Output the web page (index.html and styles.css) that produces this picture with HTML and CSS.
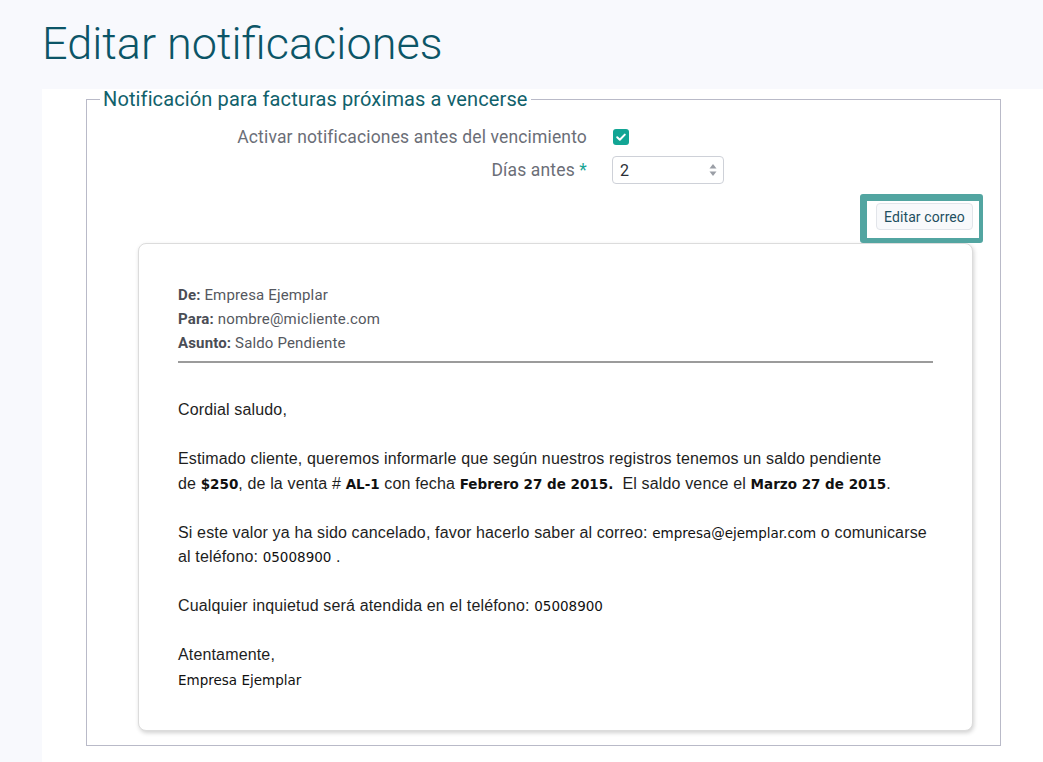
FILE: index.html
```html
<!DOCTYPE html>
<html lang="es">
<head>
<meta charset="utf-8">
<title>Editar notificaciones</title>
<link rel="stylesheet" href="styles.css">
</head>
<body>
<header class="page-head">
  <h1 class="title">Editar notificaciones</h1>
</header>
<main class="panel">
  <fieldset class="group">
    <legend class="group-title">Notificación para facturas próximas a vencerse</legend>
    <div class="form">
      <div class="row">
        <label class="label">Activar notificaciones antes del vencimiento</label>
        <div class="control">
          <span class="checkbox"><svg viewBox="0 0 16 16" width="16" height="16"><path d="M4.2 8.3l2.6 2.5 5-5.2" fill="none" stroke="#fff" stroke-width="2" stroke-linecap="round" stroke-linejoin="round"/></svg></span>
        </div>
      </div>
      <div class="row">
        <label class="label">Días antes <span class="req">*</span></label>
        <div class="control">
          <div class="number">
            <span class="number-value">2</span>
            <svg class="spin" viewBox="0 0 10 18" width="10" height="18"><path d="M5 3L8.5 7.5H1.5z" fill="#9a9ea6"/><path d="M5 15L8.5 10.5H1.5z" fill="#9a9ea6"/></svg>
          </div>
        </div>
      </div>
    </div>
    <div class="actions">
      <div class="highlight"><button class="btn" type="button">Editar correo</button></div>
    </div>
    <section class="mail">
      <div class="mail-head">
        <div><b>De:</b> Empresa Ejemplar</div>
        <div><b>Para:</b> nombre@micliente.com</div>
        <div><b>Asunto:</b> Saldo Pendiente</div>
      </div>
      <hr class="mail-rule">
      <div class="mail-body">
        <p>Cordial saludo,</p>
        <p>Estimado cliente, queremos informarle que según nuestros registros tenemos un saldo pendiente<br>de <b class="v">$250</b>, de la venta # <b class="v">AL-1</b> con fecha <b class="v">Febrero 27 de 2015.</b>&nbsp; El saldo vence el <b class="v">Marzo 27 de 2015</b>.</p>
        <p>Si este valor ya ha sido cancelado, favor hacerlo saber al correo: <span class="v">empresa@ejemplar.com</span> o comunicarse<br>al teléfono: <span class="v">05008900</span> .</p>
        <p>Cualquier inquietud será atendida en el teléfono: <span class="v">05008900</span></p>
        <p>Atentamente,<br><span class="v">Empresa Ejemplar</span></p>
      </div>
    </section>
  </fieldset>
</main>
</body>
</html>
```

FILE: styles.css
```css
* { box-sizing: border-box; }
html, body { margin: 0; padding: 0; }
body {
  background: #f8f9fd;
  font-family: Roboto, "Liberation Sans", Arial, sans-serif;
  min-height: 762px;
}
.page-head {
  padding: 17px 0 0 42px;
  height: 89px;
}
.title {
  margin: 0;
  font-family: Roboto, sans-serif;
  font-weight: 300;
  font-size: 45px;
  line-height: 54px;
  color: #0c5567;
}
.panel {
  margin-left: 42px;
  background: #fff;
  padding: 0 42px 18px 44px;
  min-height: 673px;
}
.group {
  margin: 0;
  border: 1px solid #b9bac8;
  padding: 0 13px 14px 13px;
}
.group-title {
  padding: 0 3px 0 3px;
  font-size: 20px;
  letter-spacing: 0.12px;
  line-height: 20px;
  color: #11616b;
}
.form {
  margin-top: 14px;
  display: flex;
  flex-direction: column;
  gap: 5px;
}
.row {
  display: grid;
  grid-template-columns: 487px auto;
  column-gap: 25px;
  align-items: center;
  height: 28px;
}
.label {
  text-align: right;
  font-size: 17.5px;
  letter-spacing: 0.15px;
  color: #6b6e77;
}
.req { color: #1aa596; }
.control { display: flex; align-items: center; }
.checkbox {
  width: 16px;
  height: 16px;
  margin-left: 1px;
  border-radius: 3px;
  background: #12a594;
  display: block;
}
.checkbox svg { display: block; }
.number {
  width: 112px;
  height: 28px;
  border: 1px solid #ced1d8;
  border-radius: 4px;
  display: flex;
  align-items: center;
  justify-content: space-between;
  padding: 0 5px 0 7px;
}
.number-value { font-size: 16px; color: #2b2f36; }
.spin { display: block; }
.actions {
  display: flex;
  justify-content: flex-end;
  padding: 10px 4px 0 0;
}
.highlight {
  border-style: solid;
  border-color: #52a5a1;
  border-width: 7px 4px 5px 7px;
  border-radius: 3px;
  padding: 2px 6px 8px 9px;
  background: #fff;
}
.btn {
  display: block;
  height: 27px;
  width: 97px;
  padding: 0;
  background: #f8f9fb;
  border: 1px solid #e2e5ea;
  border-radius: 4px;
  font-family: Roboto, sans-serif;
  font-size: 14px;
  letter-spacing: 0.1px;
  color: #1e4f60;
}
.mail {
  margin: 0 14px 0 38px;
  background: #fff;
  border: 1px solid #dcdcdc;
  border-radius: 8px;
  box-shadow: 1px 2px 4px rgba(0,0,0,0.18);
  padding: 39px 39px 38px 39px;
}
.mail-head {
  font-size: 15px;
  letter-spacing: 0.15px;
  line-height: 24px;
  color: #555860;
}
.mail-head b { color: #4a4d55; font-weight: 700; }
.mail-rule {
  margin: 6px 0 0 0;
  border: 0;
  border-top: 2px solid #9b9b9b;
  height: 0;
}
.mail-body {
  margin-top: 35px;
  font-family: "Liberation Sans", Arial, sans-serif;
  font-size: 16px;
  letter-spacing: 0.15px;
  line-height: 24.5px;
  color: #1e1e1e;
}
.mail-body p { margin: 0 0 24.5px 0; white-space: nowrap; }
.mail-body p:last-child { margin-bottom: 0; }
.v {
  font-family: "DejaVu Sans", Verdana, sans-serif;
  font-size: 13.5px;
  letter-spacing: 0;
  color: #111;
}
b.v { font-weight: 700; }
```
